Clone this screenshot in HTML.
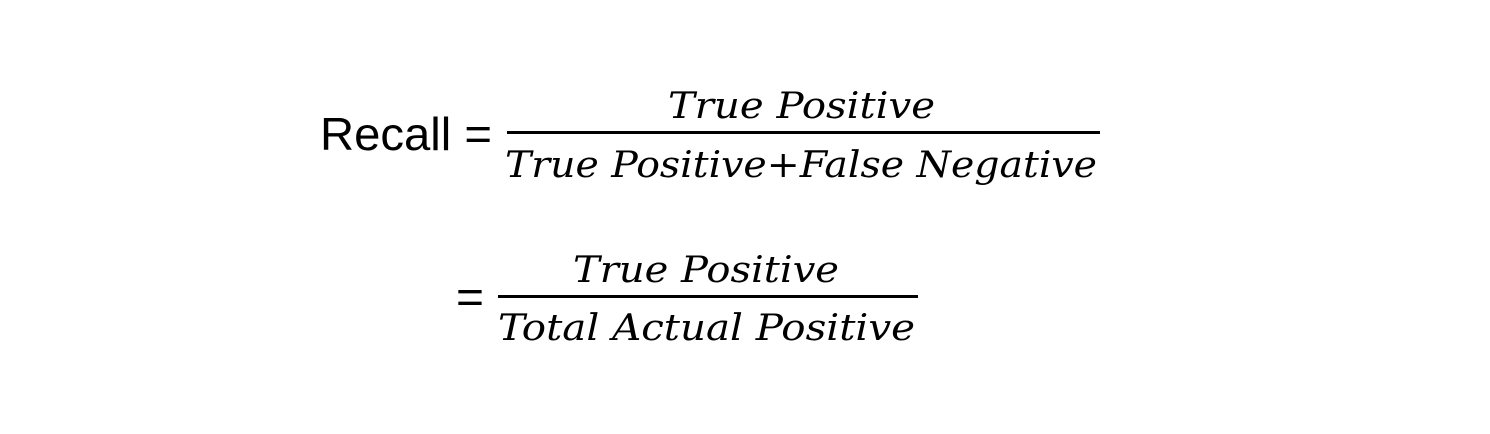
<!DOCTYPE html>
<html><head><style>
html,body{margin:0;padding:0;background:#fff;width:1490px;height:434px;overflow:hidden}
</style></head><body>
<svg width="1490" height="434" viewBox="0 0 1490 434" xmlns="http://www.w3.org/2000/svg">
<rect width="1490" height="434" fill="#fff"/>
<g fill="#000">
<text x="320" y="150" font-family="Liberation Sans, sans-serif" font-size="46" textLength="172" lengthAdjust="spacingAndGlyphs">Recall =</text>
<rect x="507" y="131" width="593" height="3"/>
<text x="668" y="118" font-family="DejaVu Serif, serif" font-style="italic" font-size="36" textLength="267" lengthAdjust="spacingAndGlyphs">True Positive</text>
<text x="505" y="177" font-family="DejaVu Serif, serif" font-style="italic" font-size="36" textLength="592" lengthAdjust="spacingAndGlyphs">True Positive+False Negative</text>
<text x="456" y="313" font-family="Liberation Sans, sans-serif" font-size="46" textLength="28" lengthAdjust="spacingAndGlyphs">=</text>
<rect x="498" y="295" width="420" height="3"/>
<text x="573" y="282" font-family="DejaVu Serif, serif" font-style="italic" font-size="36" textLength="266" lengthAdjust="spacingAndGlyphs">True Positive</text>
<text x="498" y="340" font-family="DejaVu Serif, serif" font-style="italic" font-size="36" textLength="417" lengthAdjust="spacingAndGlyphs">Total Actual Positive</text>
</g>
</svg>
</body></html>
